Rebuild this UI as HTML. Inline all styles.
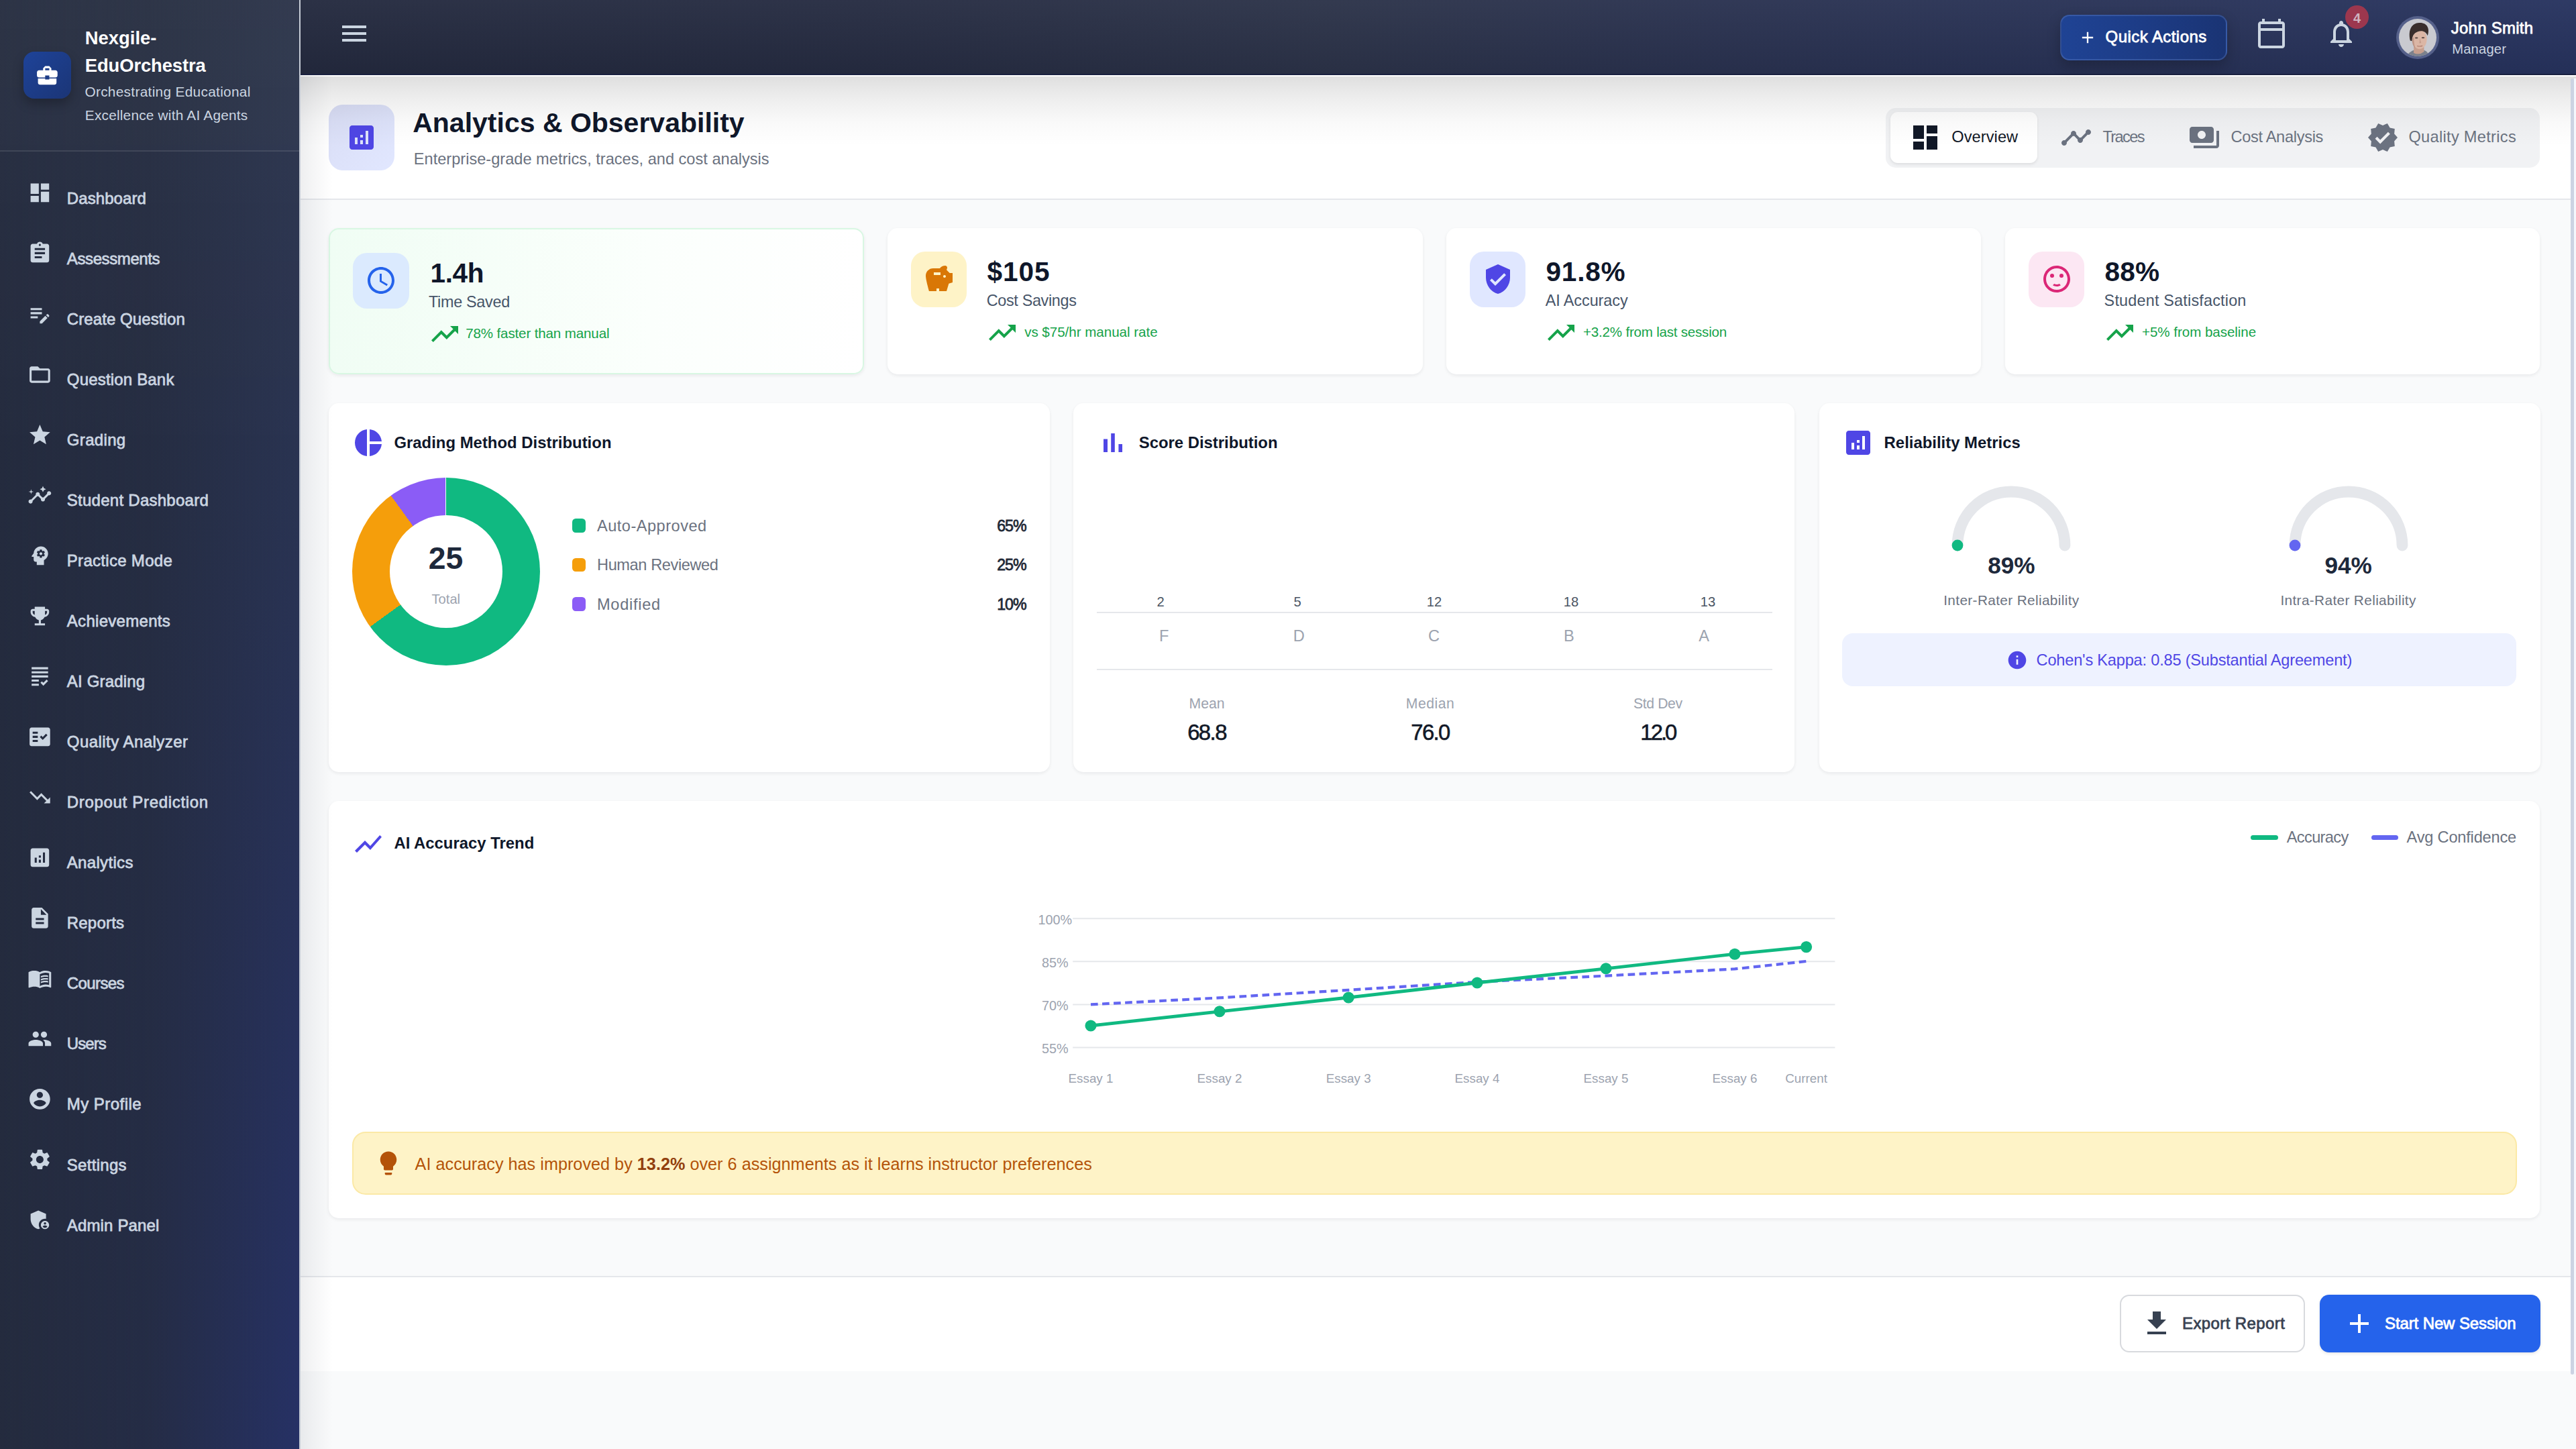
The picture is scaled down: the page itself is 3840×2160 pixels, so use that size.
<!DOCTYPE html><html lang="en"><head><meta charset="utf-8"><title>Analytics &amp; Observability</title><style>
*{box-sizing:border-box;margin:0;padding:0}
html,body{width:3840px;height:2160px;overflow:hidden;background:#f9fafb}
body{font-family:"Liberation Sans",Arial,sans-serif;}
#stage{position:absolute;left:0;top:0;width:1920px;height:1080px;zoom:2;overflow:hidden;background:#f9fafb}
@media (max-width:2400px){html,body{width:1920px;height:1080px}#stage{zoom:1}}
.t{position:absolute;white-space:nowrap;line-height:1;display:block;text-decoration:none}
.ic{position:absolute;display:block}
.abs{position:absolute}
aside{position:absolute;left:0;top:0;width:224px;height:1080px;border-right:1px solid rgba(226,232,240,.85);
 background:
  linear-gradient(to bottom, rgba(255,255,255,.03) 0, rgba(255,255,255,0) 32%),
  linear-gradient(to right, rgba(36,43,62,1) 0%, rgba(36,43,62,.8) 50%, rgba(36,43,62,.42) 75%, rgba(36,43,62,0) 100%),
  linear-gradient(to bottom, rgb(42,51,72) 0%, rgb(42,51,76) 10%, rgb(41,51,82) 35%, rgb(39,49,90) 65%, rgb(38,49,101) 100%);}
aside .hdr{position:absolute;left:0;top:0;width:223px;height:113px;border-bottom:1px solid rgba(255,255,255,.1);background:rgba(255,255,255,.012)}
header.top{position:absolute;left:224px;top:0;width:1696px;height:56px;
 background:linear-gradient(to bottom, rgba(255,255,255,.035), rgba(0,0,0,.07)),linear-gradient(90deg,#242a3f 0%,#262c42 25%,#2c3349 45%,#2a3250 62%,#27335f 100%);border-bottom:1px solid #1a2140}
main{position:absolute;left:224px;top:56px;width:1696px;height:1024px;background:#f9fafb}
.card{position:absolute;background:#fff;border-radius:7.5px;box-shadow:0 1px 3px rgba(15,23,42,.045),0 1px 2px rgba(15,23,42,.03)}
.ibox{position:absolute;border-radius:10.5px}
.semi{-webkit-text-stroke:0.3px currentColor}
</style></head><body><div id="stage">
<main>
<section class="abs" style="left:0;top:0;width:1696px;height:93px;background:#fff;border-bottom:1px solid #e5e7eb">
<div class="ibox" style="left:21px;top:22px;width:49px;height:49px;background:linear-gradient(135deg,#d9ddf5,#e1e7ff)"></div>
<svg class="ic" style="left:33.50px;top:34.50px;width:24px;height:24px;fill:#4f46e5;" viewBox="0 0 24 24"><path d="M19 3H5c-1.1 0-2 .9-2 2v14c0 1.1.9 2 2 2h14c1.1 0 2-.9 2-2V5c0-1.1-.9-2-2-2zM9 17H7v-5h2v5zm4 0h-2v-3h2v3zm0-5h-2v-2h2v2zm4 5h-2V7h2v10z"/></svg>
<h1 class="t" style="left:83.60px;top:25.50px;font-size:20.5px;color:#0f172a;font-weight:700;">Analytics &amp; Observability</h1>
<p class="t" style="left:84.40px;top:57.00px;font-size:11.8px;color:#6b7280;letter-spacing:0.001px;">Enterprise-grade metrics, traces, and cost analysis</p>
<nav class="abs" style="left:1181.7px;top:24.5px;width:487.5px;height:44.5px;background:#f1f2f4;border-radius:7.5px">
<div class="abs" style="left:3.5px;top:3px;width:109.5px;height:38.2px;background:#fff;border-radius:5.5px;box-shadow:0 1px 2px rgba(0,0,0,.09)"></div>
</nav>
<svg class="ic" style="left:1199.20px;top:34.40px;width:24px;height:24px;fill:#111827;" viewBox="0 0 24 24"><path d="M3 13h8V3H3v10zm0 8h8v-6H3v6zm10 0h8V11h-8v10zm0-18v6h8V3h-8z"/></svg>
<a class="t" style="left:1230.60px;top:40.50px;font-size:11.8px;color:#111827;letter-spacing:0.046px;">Overview</a>
<svg class="ic" style="left:1311.30px;top:34.40px;width:24px;height:24px;fill:#6b7280;" viewBox="0 0 24 24"><path d="M23 8c0 1.1-.9 2-2 2-.18 0-.35-.02-.51-.07l-3.560 3.550c.05.16.07.34.07.52 0 1.1-.9 2-2 2s-2-.9-2-2c0-.18.02-.36.07-.52l-2.550-2.550c-.16.05-.34.07-.52.07s-.36-.02-.52-.07l-4.550 4.560c.05.16.07.33.07.51 0 1.1-.9 2-2 2s-2-.9-2-2 .9-2 2-2c.18 0 .35.02.51.07l4.560-4.550C8.020 9.360 8 9.180 8 9c0-1.1.9-2 2-2s2 .9 2 2c0 .18-.02.36-.07.52l2.550 2.550c.16-.05.34-.07.52-.07s.36.02.52.07l3.550-3.560C19.020 8.350 19 8.180 19 8c0-1.1.9-2 2-2s2 .9 2 2z"/></svg>
<a class="t" style="left:1343.20px;top:40.50px;font-size:11.8px;color:#6b7280;letter-spacing:-0.805px;">Traces</a>
<svg class="ic" style="left:1407.10px;top:34.40px;width:24px;height:24px;fill:#6b7280;" viewBox="0 0 24 24"><path d="M19 14V6c0-1.1-.9-2-2-2H3c-1.1 0-2 .9-2 2v8c0 1.1.9 2 2 2h14c1.1 0 2-.9 2-2zm-9-1c-1.660 0-3-1.340-3-3s1.340-3 3-3 3 1.340 3 3-1.340 3-3 3zm13-6v11c0 1.1-.9 2-2 2H4v-2h17V7h2z"/></svg>
<a class="t" style="left:1438.70px;top:40.50px;font-size:11.8px;color:#6b7280;letter-spacing:-0.152px;">Cost Analysis</a>
<svg class="ic" style="left:1540.20px;top:34.40px;width:24px;height:24px;fill:#6b7280;" viewBox="0 0 24 24"><path d="M23 12l-2.440-2.790.34-3.690-3.610-.82-1.890-3.200L12 2.960 8.600 1.500 6.710 4.690 3.100 5.500l.34 3.700L1 12l2.440 2.790-.34 3.700 3.610.82L8.600 22.500l3.400-1.470 3.400 1.460 1.890-3.190 3.610-.82-.34-3.690L23 12zm-12.910 4.720l-3.800-3.810 1.480-1.480 2.320 2.330 5.850-5.870 1.480 1.480-7.330 7.350z"/></svg>
<a class="t" style="left:1571.20px;top:40.50px;font-size:11.8px;color:#6b7280;letter-spacing:0.155px;">Quality Metrics</a>
<div class="abs" style="left:0;top:1px;width:1696px;height:52px;background:linear-gradient(to bottom,rgba(0,0,0,.125) 0,rgba(0,0,0,.07) 30%,rgba(0,0,0,.025) 65%,rgba(0,0,0,0) 100%)"></div>
</section>
<article class="card" style="left:21.1px;top:113.8px;width:398.7px;height:109px;background:linear-gradient(90deg,#f0fdf4 0%,#fbfffc 60%,#ffffff 100%);border:1px solid #d9f7e3;">
</article>
<div class="ibox" style="left:39.2px;top:132.4px;width:41.6px;height:41.6px;background:#dbeafe"></div>
<svg class="ic" style="left:48.00px;top:140.80px;width:24px;height:24px;fill:#2563eb;" viewBox="0 0 24 24"><path d="M11.990 2C6.470 2 2 6.480 2 12s4.470 10 9.990 10C17.520 22 22 17.520 22 12S17.520 2 11.990 2zM12 20c-4.420 0-8-3.580-8-8s3.580-8 8-8 8 3.580 8 8-3.580 8-8 8zm.5-13H11v6l5.250 3.150.75-1.230-4.500-2.670z"/></svg>
<div class="t" style="left:96.80px;top:137.50px;font-size:20.3px;color:#0f172a;font-weight:700;letter-spacing:-0.207px;">1.4h</div>
<div class="t" style="left:95.50px;top:163.50px;font-size:11.7px;color:#475569;letter-spacing:-0.155px;">Time Saved</div>
<svg class="ic" style="left:95.30px;top:180.90px;width:24px;height:24px;fill:#16a34a;" viewBox="0 0 24 24"><path d="M16 6l2.290 2.290-4.880 4.880-4-4L2 16.590 3.410 18l6-6 4 4 6.300-6.290L22 12V6z"/></svg>
<div class="t" style="left:123.10px;top:187.50px;font-size:10.3px;color:#16a34a;letter-spacing:-0.076px;">78% faster than manual</div>
<article class="card" style="left:437.6px;top:114.1px;width:398.7px;height:109px;">
</article>
<div class="ibox" style="left:455.1px;top:131.5px;width:41.6px;height:41.6px;background:#fef3c7"></div>
<svg class="ic" style="left:463.87px;top:139.90px;width:24px;height:24px;fill:#d97706;" viewBox="0 0 24 24"><path d="M19.830 7.500l-2.270-2.270c.07-.42.18-.81.32-1.150.08-.18.12-.37.12-.58 0-.83-.67-1.500-1.500-1.500-1.640 0-3.090.79-4 2h-5C4.460 4 2 6.460 2 9.500S4.500 21 4.500 21H10v-2h2v2h5.500l1.680-5.590 2.820-.94V7.500h-2.170zM13 9H8V7h5v2zm3 2c-.55 0-1-.45-1-1s.45-1 1-1 1 .45 1 1-.45 1-1 1z"/></svg>
<div class="t" style="left:511.77px;top:136.50px;font-size:20.3px;color:#0f172a;font-weight:700;letter-spacing:0.480px;">$105</div>
<div class="t" style="left:511.37px;top:162.50px;font-size:11.7px;color:#475569;letter-spacing:-0.167px;">Cost Savings</div>
<svg class="ic" style="left:511.17px;top:180.00px;width:24px;height:24px;fill:#16a34a;" viewBox="0 0 24 24"><path d="M16 6l2.290 2.290-4.880 4.880-4-4L2 16.590 3.410 18l6-6 4 4 6.300-6.290L22 12V6z"/></svg>
<div class="t" style="left:539.57px;top:186.50px;font-size:10.3px;color:#16a34a;letter-spacing:-0.016px;">vs $75/hr manual rate</div>
<article class="card" style="left:854.0px;top:114.1px;width:398.7px;height:109px;">
</article>
<div class="ibox" style="left:871.5px;top:131.5px;width:41.6px;height:41.6px;background:#e0e7ff"></div>
<svg class="ic" style="left:880.34px;top:139.90px;width:24px;height:24px;fill:#4f46e5;" viewBox="0 0 24 24"><path d="M12 1L3 5v6c0 5.550 3.840 10.740 9 12 5.160-1.260 9-6.450 9-12V5l-9-4zm-2 16l-4-4 1.410-1.410L10 14.170l6.590-6.590L18 9l-8 8z"/></svg>
<div class="t" style="left:928.24px;top:136.50px;font-size:20.3px;color:#0f172a;font-weight:700;letter-spacing:0.385px;">91.8%</div>
<div class="t" style="left:927.84px;top:162.50px;font-size:11.7px;color:#475569;letter-spacing:-0.027px;">AI Accuracy</div>
<svg class="ic" style="left:927.64px;top:180.00px;width:24px;height:24px;fill:#16a34a;" viewBox="0 0 24 24"><path d="M16 6l2.290 2.290-4.880 4.880-4-4L2 16.590 3.410 18l6-6 4 4 6.300-6.290L22 12V6z"/></svg>
<div class="t" style="left:956.04px;top:186.50px;font-size:10.3px;color:#16a34a;letter-spacing:-0.115px;">+3.2% from last session</div>
<article class="card" style="left:1270.5px;top:114.1px;width:398.7px;height:109px;">
</article>
<div class="ibox" style="left:1288.0px;top:131.5px;width:41.6px;height:41.6px;background:#fce7f3"></div>
<svg class="ic" style="left:1296.81px;top:139.90px;width:24px;height:24px;fill:#db2777;" viewBox="0 0 24 24"><circle cx="15.5" cy="9.5" r="1.5"/><circle cx="8.5" cy="9.5" r="1.5"/><path d="M11.990 2C6.470 2 2 6.480 2 12s4.470 10 9.990 10C17.520 22 22 17.520 22 12S17.520 2 11.990 2zM12 20c-4.420 0-8-3.580-8-8s3.580-8 8-8 8 3.580 8 8-3.580 8-8 8zm0-4c-.73 0-1.380-.18-1.960-.52-.12.14-.86.98-1.010 1.150.86.55 1.870.87 2.970.87 1.110 0 2.120-.33 2.980-.88-.97-1.090-.01-.02-1.010-1.150-.59.35-1.240.53-1.970.53z"/></svg>
<div class="t" style="left:1344.71px;top:136.50px;font-size:20.3px;color:#0f172a;font-weight:700;letter-spacing:0.085px;">88%</div>
<div class="t" style="left:1344.31px;top:162.50px;font-size:11.7px;color:#475569;letter-spacing:0.097px;">Student Satisfaction</div>
<svg class="ic" style="left:1344.11px;top:180.00px;width:24px;height:24px;fill:#16a34a;" viewBox="0 0 24 24"><path d="M16 6l2.290 2.290-4.880 4.880-4-4L2 16.590 3.410 18l6-6 4 4 6.300-6.290L22 12V6z"/></svg>
<div class="t" style="left:1372.51px;top:186.50px;font-size:10.3px;color:#16a34a;letter-spacing:-0.031px;">+5% from baseline</div>
<article class="card" style="left:21.0px;top:244.5px;width:537.4px;height:275px"></article>
<article class="card" style="left:576.2px;top:244.5px;width:537.4px;height:275px"></article>
<article class="card" style="left:1131.9px;top:244.5px;width:537.4px;height:275px"></article>
<svg class="ic" style="left:38.50px;top:262.00px;width:24px;height:24px;fill:#4f46e5;" viewBox="0 0 24 24"><path d="M11 2v20c-5.070-.5-9-4.790-9-10s3.930-9.500 9-10zm2.030 0v8.990H22c-.47-4.740-4.240-8.520-8.970-8.990zm0 11.010V22c4.740-.47 8.500-4.250 8.970-8.990h-8.970z"/></svg>
<h3 class="t" style="left:69.70px;top:268.00px;font-size:11.95px;color:#0f172a;font-weight:700;letter-spacing:0.005px;">Grading Method Distribution</h3>
<svg class="ic" style="left:593.70px;top:262.00px;width:24px;height:24px;fill:#4f46e5;" viewBox="0 0 24 24"><path d="M5 9.200h3V19H5zM10.600 5h2.800v14h-2.800zm5.600 8H19v6h-2.800z"/></svg>
<h3 class="t" style="left:624.90px;top:268.00px;font-size:11.95px;color:#0f172a;font-weight:700;letter-spacing:-0.010px;">Score Distribution</h3>
<svg class="ic" style="left:1149.10px;top:262.00px;width:24px;height:24px;fill:#4f46e5;" viewBox="0 0 24 24"><path d="M19 3H5c-1.1 0-2 .9-2 2v14c0 1.1.9 2 2 2h14c1.1 0 2-.9 2-2V5c0-1.1-.9-2-2-2zM9 17H7v-5h2v5zm4 0h-2v-3h2v3zm0-5h-2v-2h2v2zm4 5h-2V7h2v10z"/></svg>
<h3 class="t" style="left:1180.30px;top:268.00px;font-size:11.95px;color:#0f172a;font-weight:700;">Reliability Metrics</h3>
<div class="abs" style="left:38.4px;top:300.0px;width:140px;height:140px;border-radius:50%;background:conic-gradient(#10b981 0 234deg,#f59e0b 234deg 324deg,#8b5cf6 324deg 359.6deg,#e9fff7 359.6deg 360deg)"></div>
<div class="abs" style="left:66.4px;top:328.0px;width:84px;height:84px;border-radius:50%;background:#fff"></div>
<div class="t" style="left:108.30px;top:348.50px;font-size:23.2px;color:#1e293b;font-weight:700;transform:translateX(-50%);">25</div>
<div class="t" style="left:108.40px;top:385.50px;font-size:10.1px;color:#9ca3af;transform:translateX(-50%);">Total</div>
<div class="abs" style="left:202.5px;top:330.7px;width:10.2px;height:10.2px;border-radius:2.6px;background:#10b981"></div>
<div class="t" style="left:221.00px;top:330.50px;font-size:11.8px;color:#6b7280;letter-spacing:0.240px;">Auto-Approved</div>
<div class="t" style="left:540.80px;top:330.50px;font-size:11.6px;color:#1f2937;-webkit-text-stroke:0.38px currentColor;letter-spacing:-0.509px;transform:translateX(-100%);">65%</div>
<div class="abs" style="left:202.5px;top:359.9px;width:10.2px;height:10.2px;border-radius:2.6px;background:#f59e0b"></div>
<div class="t" style="left:221.00px;top:359.50px;font-size:11.8px;color:#6b7280;letter-spacing:-0.203px;">Human Reviewed</div>
<div class="t" style="left:540.80px;top:359.50px;font-size:11.6px;color:#1f2937;-webkit-text-stroke:0.38px currentColor;letter-spacing:-0.509px;transform:translateX(-100%);">25%</div>
<div class="abs" style="left:202.5px;top:389.1px;width:10.2px;height:10.2px;border-radius:2.6px;background:#8b5cf6"></div>
<div class="t" style="left:221.00px;top:389.00px;font-size:11.8px;color:#6b7280;letter-spacing:0.357px;">Modified</div>
<div class="t" style="left:540.80px;top:389.00px;font-size:11.6px;color:#1f2937;-webkit-text-stroke:0.38px currentColor;letter-spacing:-0.509px;transform:translateX(-100%);">10%</div>
<div class="abs" style="left:593.6px;top:399.8px;width:503.2px;height:1px;background:#e5e7eb"></div>
<div class="abs" style="left:593.6px;top:442.3px;width:503.2px;height:1px;background:#e5e7eb"></div>
<div class="t" style="left:641.00px;top:387.50px;font-size:10.1px;color:#4b5563;transform:translateX(-50%);">2</div>
<div class="t" style="left:643.60px;top:412.50px;font-size:11.8px;color:#9ca3af;transform:translateX(-50%);">F</div>
<div class="t" style="left:743.00px;top:387.50px;font-size:10.1px;color:#4b5563;transform:translateX(-50%);">5</div>
<div class="t" style="left:744.20px;top:412.50px;font-size:11.8px;color:#9ca3af;transform:translateX(-50%);">D</div>
<div class="t" style="left:845.00px;top:387.50px;font-size:10.1px;color:#4b5563;transform:translateX(-50%);">12</div>
<div class="t" style="left:844.80px;top:412.50px;font-size:11.8px;color:#9ca3af;transform:translateX(-50%);">C</div>
<div class="t" style="left:947.00px;top:387.50px;font-size:10.1px;color:#4b5563;transform:translateX(-50%);">18</div>
<div class="t" style="left:945.40px;top:412.50px;font-size:11.8px;color:#9ca3af;transform:translateX(-50%);">B</div>
<div class="t" style="left:1049.00px;top:387.50px;font-size:10.1px;color:#4b5563;transform:translateX(-50%);">13</div>
<div class="t" style="left:1046.00px;top:412.50px;font-size:11.8px;color:#9ca3af;transform:translateX(-50%);">A</div>
<div class="t" style="left:675.50px;top:463.00px;font-size:10.6px;color:#9ca3af;letter-spacing:-0.005px;transform:translateX(-50%);">Mean</div>
<div class="t" style="left:675.50px;top:482.00px;font-size:16.4px;color:#111827;-webkit-text-stroke:0.3px currentColor;letter-spacing:-0.773px;transform:translateX(-50%);">68.8</div>
<div class="t" style="left:842.00px;top:463.00px;font-size:10.6px;color:#9ca3af;letter-spacing:0.247px;transform:translateX(-50%);">Median</div>
<div class="t" style="left:842.00px;top:482.00px;font-size:16.4px;color:#111827;-webkit-text-stroke:0.3px currentColor;letter-spacing:-0.806px;transform:translateX(-50%);">76.0</div>
<div class="t" style="left:1011.70px;top:463.00px;font-size:10.6px;color:#9ca3af;letter-spacing:-0.201px;transform:translateX(-50%);">Std Dev</div>
<div class="t" style="left:1011.70px;top:482.00px;font-size:16.4px;color:#111827;-webkit-text-stroke:0.3px currentColor;letter-spacing:-1.473px;transform:translateX(-50%);">12.0</div>
<svg class="abs" style="left:1225.20px;top:300.30px;width:100px;height:60px;overflow:visible" viewBox="0 0 100 60"><path d="M 10 50 A 40 40 0 0 1 90 50" fill="none" stroke="#e5e7eb" stroke-width="8.4" stroke-linecap="round"/><circle cx="10" cy="50" r="4.2" fill="#10b981"/></svg>
<div class="t" style="left:1275.20px;top:356.50px;font-size:17.6px;color:#1e293b;font-weight:700;transform:translateX(-50%);">89%</div>
<div class="t" style="left:1275.20px;top:386.50px;font-size:10.4px;color:#6b7280;letter-spacing:0.177px;transform:translateX(-50%);">Inter-Rater Reliability</div>
<svg class="abs" style="left:1476.30px;top:300.30px;width:100px;height:60px;overflow:visible" viewBox="0 0 100 60"><path d="M 10 50 A 40 40 0 0 1 90 50" fill="none" stroke="#e5e7eb" stroke-width="8.4" stroke-linecap="round"/><circle cx="10" cy="50" r="4.2" fill="#6366f1"/></svg>
<div class="t" style="left:1526.30px;top:356.50px;font-size:17.6px;color:#1e293b;font-weight:700;transform:translateX(-50%);">94%</div>
<div class="t" style="left:1526.30px;top:386.50px;font-size:10.4px;color:#6b7280;letter-spacing:0.177px;transform:translateX(-50%);">Intra-Rater Reliability</div>
<div class="abs" style="left:1149.0px;top:416.2px;width:502.6px;height:39.1px;border-radius:8px;background:#eef2ff"></div>
<svg class="ic" style="left:1271.50px;top:428.10px;width:16px;height:16px;fill:#4f46e5;" viewBox="0 0 24 24"><path d="M12 2C6.480 2 2 6.480 2 12s4.480 10 10 10 10-4.480 10-10S17.520 2 12 2zm1 15h-2v-6h2v6zm0-8h-2V7h2v2z"/></svg>
<div class="t" style="left:1293.80px;top:430.50px;font-size:11.8px;color:#4f46e5;letter-spacing:-0.103px;">Cohen's Kappa: 0.85 (Substantial Agreement)</div>
<article class="card" style="left:21.0px;top:541.2px;width:1648.2px;height:310.6px"></article>
<svg class="ic" style="left:38.60px;top:561.00px;width:24px;height:24px;fill:#4f46e5;" viewBox="0 0 24 24"><path d="M3.500 18.490l6-6.010 4 4L22 6.920l-1.410-1.410-7.090 7.970-4-4L2 16.990z"/></svg>
<h3 class="t" style="left:69.70px;top:566.50px;font-size:11.95px;color:#0f172a;font-weight:700;letter-spacing:0.000px;">AI Accuracy Trend</h3>
<div class="abs" style="left:1453.6px;top:566.4px;width:20.2px;height:3.6px;border-radius:2px;background:#10b981"></div>
<div class="t" style="left:1480.40px;top:562.50px;font-size:11.8px;color:#6b7280;letter-spacing:-0.332px;">Accuracy</div>
<div class="abs" style="left:1543.3px;top:566.4px;width:20.2px;height:3.6px;border-radius:2px;background:#6366f1"></div>
<div class="t" style="left:1569.80px;top:562.50px;font-size:11.8px;color:#6b7280;letter-spacing:-0.100px;">Avg Confidence</div>
<svg class="abs" style="left:0;top:0;width:1696px;height:1024px;overflow:visible;font-family:'Liberation Sans',Arial,sans-serif" viewBox="224 56 1696 1024"><line x1="799.6" x2="1367.7" y1="684.6" y2="684.6" stroke="#e5e7eb" stroke-width="1"/><text x="786.4" y="688.9" font-size="9.9" fill="#9ca3af" text-anchor="middle">100%</text><line x1="799.6" x2="1367.7" y1="716.6" y2="716.6" stroke="#e5e7eb" stroke-width="1"/><text x="786.4" y="720.9" font-size="9.9" fill="#9ca3af" text-anchor="middle">85%</text><line x1="799.6" x2="1367.7" y1="748.7" y2="748.7" stroke="#e5e7eb" stroke-width="1"/><text x="786.4" y="753.0" font-size="9.9" fill="#9ca3af" text-anchor="middle">70%</text><line x1="799.6" x2="1367.7" y1="780.8" y2="780.8" stroke="#e5e7eb" stroke-width="1"/><text x="786.4" y="785.1" font-size="9.9" fill="#9ca3af" text-anchor="middle">55%</text><polyline fill="none" stroke="#6366f1" stroke-width="2.1" stroke-dasharray="5.33 3.2" points="813,748.7 909,743.7 1005.1,737.9 1101,731.9 1197,727.3 1293,722.2 1346.3,716.5"/><polyline fill="none" stroke="#10b981" stroke-width="2.4" stroke-linejoin="round" points="813,764.5 909,753.9 1005.1,743.5 1101,732.5 1197,721.9 1293,711.1 1346.3,705.8"/><circle cx="813" cy="764.5" r="4.27" fill="#10b981"/><circle cx="909" cy="753.9" r="4.27" fill="#10b981"/><circle cx="1005.1" cy="743.5" r="4.27" fill="#10b981"/><circle cx="1101" cy="732.5" r="4.27" fill="#10b981"/><circle cx="1197" cy="721.9" r="4.27" fill="#10b981"/><circle cx="1293" cy="711.1" r="4.27" fill="#10b981"/><circle cx="1346.3" cy="705.8" r="4.27" fill="#10b981"/><text x="813" y="806.8" font-size="9.4" fill="#9ca3af" text-anchor="middle">Essay 1</text><text x="909" y="806.8" font-size="9.4" fill="#9ca3af" text-anchor="middle">Essay 2</text><text x="1005.1" y="806.8" font-size="9.4" fill="#9ca3af" text-anchor="middle">Essay 3</text><text x="1101" y="806.8" font-size="9.4" fill="#9ca3af" text-anchor="middle">Essay 4</text><text x="1197" y="806.8" font-size="9.4" fill="#9ca3af" text-anchor="middle">Essay 5</text><text x="1293" y="806.8" font-size="9.4" fill="#9ca3af" text-anchor="middle">Essay 6</text><text x="1346.3" y="806.8" font-size="9.4" fill="#9ca3af" text-anchor="middle">Current</text></svg>
<div class="abs" style="left:38.4px;top:787.5px;width:1613.4px;height:47px;border-radius:10px;background:#fef3c7;border:1px solid #fbe9a6"></div>
<svg class="ic" style="left:54.80px;top:800.70px;width:21px;height:21px;fill:#b45309;" viewBox="0 0 24 24"><path d="M9 21c0 .5.4 1 1 1h4c.6 0 1-.5 1-1v-1H9v1zm3-19C8.100 2 5 5.100 5 9c0 2.400 1.200 4.500 3 5.700V17c0 .5.4 1 1 1h6c.6 0 1-.5 1-1v-2.300c1.800-1.300 3-3.400 3-5.700 0-3.900-3.100-7-7-7z"/></svg>
<p class="t" style="left:85.3px;top:805.50px;font-size:12.6px;color:#b45309;letter-spacing:0.015px">AI accuracy has improved by <strong style="color:#92400e">13.2%</strong> over 6 assignments as it learns instructor preferences</p>
<footer class="abs" style="left:0;top:895.0px;width:1696px;height:71px;background:#fff;border-top:1px solid #e5e7eb"></footer>
<div class="abs" style="left:1356.1px;top:909.0px;width:138.1px;height:43px;border-radius:7px;background:#fff;border:1px solid #d8dade"></div>
<svg class="ic" style="left:1371.30px;top:918.30px;width:24px;height:24px;fill:#374151;" viewBox="0 0 24 24"><path d="M19 9h-4V3H9v6H5l7 7 7-7zM5 18v2h14v-2H5z"/></svg>
<div class="t" style="left:1402.50px;top:924.50px;font-size:12.0px;color:#374151;-webkit-text-stroke:0.38px currentColor;letter-spacing:0.197px;">Export Report</div>
<div class="abs" style="left:1504.8px;top:909.0px;width:164.6px;height:43px;border-radius:7px;background:#2563eb;box-shadow:0 1px 2px rgba(0,0,0,.1)"></div>
<svg class="ic" style="left:1522.30px;top:918.50px;width:24px;height:24px;fill:#ffffff;" viewBox="0 0 24 24"><path d="M19 13h-6v6h-2v-6H5v-2h6V5h2v6h6v2z"/></svg>
<div class="t" style="left:1553.50px;top:924.50px;font-size:12.0px;color:#ffffff;-webkit-text-stroke:0.4px currentColor;letter-spacing:-0.057px;">Start New Session</div>
<div class="abs" style="left:0;top:0;width:24px;height:1024px;background:linear-gradient(90deg,rgba(15,23,42,.072) 0,rgba(15,23,42,.045) 35%,rgba(15,23,42,.018) 70%,rgba(15,23,42,0) 100%)"></div>
<div class="abs" style="left:1694.5px;top:2.5px;width:1.5px;height:966px;background:#f5f7fd"></div>
<div class="abs" style="left:1692.0px;top:2.5px;width:2.5px;height:966px;border-radius:1.5px;background:#ccd3e3"></div>
</main>
<header class="top">
<svg class="ic" style="left:27.90px;top:13.10px;width:24px;height:24px;fill:#cbd5e1;" viewBox="0 0 24 24"><path d="M3 18h18v-2H3v2zm0-5h18v-2H3v2zm0-7v2h18V6H3z"/></svg>
<div class="abs" style="left:1311.4px;top:11.2px;width:124.6px;height:33.7px;border-radius:7px;border:1px solid rgba(120,150,220,.28);background:linear-gradient(90deg,#1f4394 0%,#1d3c86 50%,#1a3474 100%);box-shadow:0 4px 10px rgba(0,0,0,.22)"></div>
<svg class="ic" style="left:1325.00px;top:21.10px;width:14px;height:14px;fill:#ffffff;" viewBox="0 0 24 24"><path d="M19 13h-6v6h-2v-6H5v-2h6V5h2v6h6v2z"/></svg>
<div class="t" style="left:1345.30px;top:21.50px;font-size:12.0px;color:#ffffff;-webkit-text-stroke:0.4px currentColor;letter-spacing:0.217px;">Quick Actions</div>
<svg class="ic" style="left:1457.00px;top:13.00px;width:24px;height:24px;fill:#cbd5e1;" viewBox="0 0 24 24"><path d="M20 3h-1V1h-2v2H7V1H5v2H4c-1.1 0-2 .9-2 2v16c0 1.1.9 2 2 2h16c1.1 0 2-.9 2-2V5c0-1.1-.9-2-2-2zm0 18H4V10h16v11zm0-13H4V5h16v3z"/></svg>
<svg class="ic" style="left:1509.00px;top:13.00px;width:24px;height:24px;fill:#cbd5e1;" viewBox="0 0 24 24"><path d="M12 22c1.1 0 2-.9 2-2h-4c0 1.1.9 2 2 2zm6-6v-5c0-3.070-1.630-5.640-4.500-6.320V4c0-.83-.67-1.500-1.500-1.500s-1.500.67-1.500 1.500v.68C7.640 5.360 6 7.920 6 11v5l-2 2v1h16v-1l-2-2zm-2 1H8v-6c0-2.480 1.510-4.500 4-4.500s4 2.020 4 4.500v6z"/></svg>
<div class="abs" style="left:1524.0px;top:4px;width:17.5px;height:17.5px;border-radius:50%;background:#9c374e"></div>
<div class="t" style="left:1532.80px;top:8.50px;font-size:10px;color:#cfb4c0;font-weight:700;transform:translateX(-50%);">4</div>
<svg class="abs" style="left:1562.0px;top:12.2px;width:32px;height:32px" viewBox="0 0 32 32"><defs><clipPath id="av"><circle cx="16" cy="16" r="14"/></clipPath></defs><circle cx="16" cy="16" r="16" fill="#55608a"/><g clip-path="url(#av)"><rect width="32" height="32" fill="#c9cad0"/><path d="M7 32 L9.5 27.5 Q12 25.5 14 25 L21 25.5 Q24 26.5 25.5 32 Z" fill="#7b818c"/><path d="M13.2 21 L13 27.5 Q17 29.5 20.8 26.5 L20.6 21 Z" fill="#c79f8e"/><ellipse cx="17.3" cy="17.2" rx="5.5" ry="7.4" fill="#dbb6a5"/><path d="M11.9 17 Q11.6 22 14.5 24.2 Q12.8 20.5 13.3 15.5 Z" fill="#b48a7b" opacity=".75"/><path d="M10.4 18.2 C8.6 10 11.8 5.2 17 5 C23.2 4.6 25.2 9.4 23.4 14.6 C22.2 11.2 19 10.4 16 11.6 C13 12.6 11.9 15 11.7 18.6 Z" fill="#3a2e2c"/><ellipse cx="15.1" cy="16.3" rx="1.15" ry=".5" fill="#3f302d" opacity=".85"/><ellipse cx="20" cy="16.1" rx="1.15" ry=".5" fill="#3f302d" opacity=".85"/><path d="M17.6 16.8 L18.6 20 L17.2 20.3 Z" fill="#b48a7b" opacity=".6"/><path d="M15.6 22.2 Q17.6 22.9 19.6 22.1" stroke="#a87668" stroke-width=".55" fill="none"/></g></svg>
<div class="t" style="left:1602.90px;top:15.00px;font-size:12.0px;color:#ffffff;-webkit-text-stroke:0.4px currentColor;letter-spacing:0.119px;">John Smith</div>
<div class="t" style="left:1603.60px;top:31.50px;font-size:10.1px;color:#cbd5e1;letter-spacing:0.090px;">Manager</div>
</header>
<aside>
<div class="hdr"></div>
<div class="abs" style="left:17.6px;top:38.4px;width:35.2px;height:35.2px;border-radius:8px;background:linear-gradient(135deg,#1e4399,#1b3576);box-shadow:0 4px 8px rgba(0,0,0,.25)"></div>
<svg class="ic" style="left:26.00px;top:46.80px;width:18.4px;height:18.4px;fill:#ffffff;" viewBox="0 0 24 24"><path d="M10 16v-1H3.010L3 19c0 1.110.89 2 2 2h14c1.110 0 2-.89 2-2v-4h-7v1h-4zm10-9h-4.010V5l-2-2h-4l-2 2v2H4c-1.1 0-2 .9-2 2v3c0 1.110.89 2 2 2h6v-2h4v2h6c1.1 0 2-.9 2-2V9c0-1.1-.9-2-2-2zm-6 0h-4V5h4v2z"/></svg>
<div class="t" style="left:63.40px;top:21.50px;font-size:13.7px;color:#ffffff;font-weight:700;">Nexgile-</div>
<div class="t" style="left:63.40px;top:42.00px;font-size:13.7px;color:#ffffff;font-weight:700;letter-spacing:-0.055px;">EduOrchestra</div>
<div class="t" style="left:63.20px;top:63.50px;font-size:10.4px;color:#cbd5e1;letter-spacing:0.160px;">Orchestrating Educational</div>
<div class="t" style="left:63.40px;top:81.00px;font-size:10.4px;color:#cbd5e1;letter-spacing:0.112px;">Excellence with AI Agents</div>
<nav>
<svg class="ic" style="left:20.60px;top:134.70px;width:18.4px;height:18.4px;fill:#cbd5e1;" viewBox="0 0 24 24"><path d="M3 13h8V3H3v10zm0 8h8v-6H3v6zm10 0h8V11h-8v10zm0-18v6h8V3h-8z"/></svg>
<a class="t" style="left:49.90px;top:142.00px;font-size:12.0px;color:#cbd5e1;-webkit-text-stroke:0.38px currentColor;letter-spacing:0.043px;">Dashboard</a>
<svg class="ic" style="left:20.60px;top:179.73px;width:18.4px;height:18.4px;fill:#cbd5e1;" viewBox="0 0 24 24"><path d="M19 3h-4.18C14.4 1.84 13.3 1 12 1c-1.3 0-2.4.84-2.82 2H5c-1.1 0-2 .9-2 2v14c0 1.1.9 2 2 2h14c1.1 0 2-.9 2-2V5c0-1.1-.9-2-2-2zm-7 0c.55 0 1 .45 1 1s-.45 1-1 1-1-.45-1-1 .45-1 1-1zm2 14H7v-2h7v2zm3-4H7v-2h10v2zm0-4H7V7h10v2z"/></svg>
<a class="t" style="left:49.90px;top:187.00px;font-size:12.0px;color:#cbd5e1;-webkit-text-stroke:0.38px currentColor;letter-spacing:-0.196px;">Assessments</a>
<svg class="ic" style="left:20.60px;top:224.76px;width:18.4px;height:18.4px;fill:#cbd5e1;" viewBox="0 0 24 24"><path d="M3 10h11v2H3v-2zm0-2h11V6H3v2zm0 8h7v-2H3v2zm15.01-3.13.71-.71c.39-.39 1.02-.39 1.41 0l.71.71c.39.39.39 1.02 0 1.41l-.71.71-2.12-2.12zm-.71.71-5.3 5.3V21h2.12l5.3-5.3-2.12-2.12z"/></svg>
<a class="t" style="left:49.90px;top:232.00px;font-size:12.0px;color:#cbd5e1;-webkit-text-stroke:0.38px currentColor;letter-spacing:0.044px;">Create Question</a>
<svg class="ic" style="left:20.60px;top:269.79px;width:18.4px;height:18.4px;fill:#cbd5e1;" viewBox="0 0 24 24"><path d="M20 6h-8l-2-2H4c-1.1 0-1.99.9-1.99 2L2 18c0 1.1.9 2 2 2h16c1.1 0 2-.9 2-2V8c0-1.1-.9-2-2-2zm0 12H4V8h16v10z"/></svg>
<a class="t" style="left:49.90px;top:277.00px;font-size:12.0px;color:#cbd5e1;-webkit-text-stroke:0.38px currentColor;letter-spacing:0.090px;">Question Bank</a>
<svg class="ic" style="left:20.60px;top:314.82px;width:18.4px;height:18.4px;fill:#cbd5e1;" viewBox="0 0 24 24"><path d="M12 17.27L18.18 21l-1.64-7.03L22 9.24l-7.19-.61L12 2 9.19 8.63 2 9.24l5.46 4.73L5.82 21z"/></svg>
<a class="t" style="left:49.90px;top:322.00px;font-size:12.0px;color:#cbd5e1;-webkit-text-stroke:0.38px currentColor;letter-spacing:0.168px;">Grading</a>
<svg class="ic" style="left:20.60px;top:359.85px;width:18.4px;height:18.4px;fill:#cbd5e1;" viewBox="0 0 24 24"><path d="M21 8c-1.45 0-2.26 1.44-1.93 2.51l-3.55 3.56c-.3-.09-.74-.09-1.04 0l-2.55-2.55C12.27 10.45 11.46 9 10 9c-1.45 0-2.27 1.44-1.93 2.52l-4.56 4.55C2.44 15.74 1 16.55 1 18c0 1.1.9 2 2 2 1.45 0 2.26-1.44 1.93-2.51l4.55-4.56c.3.09.74.09 1.04 0l2.55 2.55C12.73 16.55 13.54 18 15 18c1.45 0 2.27-1.44 1.93-2.52l3.56-3.55c1.07.33 2.51-.48 2.51-1.93 0-1.1-.9-2-2-2z"/><path d="M15 9l.94-2.07L18 6l-2.06-.93L15 3l-.92 2.07L12 6l2.08.93zM3.500 11L4 9l2-.5L4 8l-.5-2L3 8l-2 .5L3 9z"/></svg>
<a class="t" style="left:49.90px;top:367.00px;font-size:12.0px;color:#cbd5e1;-webkit-text-stroke:0.38px currentColor;letter-spacing:0.131px;">Student Dashboard</a>
<svg class="ic" style="left:20.60px;top:404.88px;width:18.4px;height:18.4px;fill:#cbd5e1;" viewBox="0 0 24 24"><path d="M13 8.570c-.79 0-1.43.64-1.43 1.43s.64 1.43 1.43 1.43 1.43-.64 1.43-1.43-.64-1.43-1.43-1.43z"/><path d="M13 3C9.250 3 6.200 5.940 6.020 9.640L4.100 12.200c-.25.33-.01.8.4.8H6v3c0 1.100.9 2 2 2h1v3h7v-4.680c2.360-1.120 4-3.530 4-6.320 0-3.870-3.130-7-7-7zm3 7c0 .13-.01.26-.02.39l.83.66c.08.06.1.16.05.25l-.8 1.390c-.05.09-.16.12-.24.09l-.99-.4c-.21.16-.43.29-.67.39L14 13.830c-.01.1-.1.17-.2.17h-1.600c-.1 0-.18-.07-.2-.17l-.15-1.060c-.25-.1-.47-.23-.68-.39l-.99.4c-.09.03-.2 0-.25-.09l-.8-1.390c-.05-.08-.03-.19.05-.25l.84-.66c-.01-.13-.02-.26-.02-.39s.02-.27.04-.39l-.85-.66c-.08-.06-.1-.16-.05-.26l.8-1.380c.05-.09.15-.12.24-.09l1 .4c.2-.15.43-.29.67-.39l.15-1.060c.02-.1.1-.17.2-.17h1.600c.1 0 .18.07.2.17l.15 1.060c.24.1.46.23.67.39l1-.4c.09-.03.2 0 .24.09l.8 1.380c.05.09.03.2-.05.26l-.85.66c.03.12.04.25.04.39z"/></svg>
<a class="t" style="left:49.90px;top:412.00px;font-size:12.0px;color:#cbd5e1;-webkit-text-stroke:0.38px currentColor;letter-spacing:0.150px;">Practice Mode</a>
<svg class="ic" style="left:20.60px;top:449.91px;width:18.4px;height:18.4px;fill:#cbd5e1;" viewBox="0 0 24 24"><path d="M19 5h-2V3H7v2H5c-1.1 0-2 .9-2 2v1c0 2.55 1.92 4.63 4.39 4.940.63 1.500 1.980 2.630 3.610 2.960V19H7v2h10v-2h-4v-3.100c1.630-.33 2.980-1.460 3.610-2.960C19.080 12.630 21 10.550 21 8V7c0-1.1-.9-2-2-2zM5 8V7h2v3.820C5.840 10.400 5 9.300 5 8zm14 0c0 1.300-.84 2.400-2 2.820V7h2v1z"/></svg>
<a class="t" style="left:49.90px;top:457.00px;font-size:12.0px;color:#cbd5e1;-webkit-text-stroke:0.38px currentColor;letter-spacing:0.148px;">Achievements</a>
<svg class="ic" style="left:20.60px;top:494.94px;width:18.4px;height:18.4px;fill:#cbd5e1;" viewBox="0 0 24 24"><path d="M4 7h16v2H4zm0 6h16v-2H4zm0 4h7v-2H4zm0 4h7v-2H4zm11.410-2.830L14 16.750l-1.410 1.410L15.410 21 20 16.420 18.580 15zM4 3v2h16V3z"/></svg>
<a class="t" style="left:49.90px;top:502.00px;font-size:12.0px;color:#cbd5e1;-webkit-text-stroke:0.38px currentColor;letter-spacing:0.093px;">AI Grading</a>
<svg class="ic" style="left:20.60px;top:539.97px;width:18.4px;height:18.4px;fill:#cbd5e1;" viewBox="0 0 24 24"><path fill-rule="evenodd" d="M20 3H4c-1.1 0-2 .9-2 2v14c0 1.1.9 2 2 2h16c1.1 0 2-.9 2-2V5c0-1.1-.9-2-2-2zM10 17H5v-2h5v2zm0-4H5v-2h5v2zm0-4H5V7h5v2zm4.820 6L12 12.160l1.410-1.410 1.410 1.420L17.990 9l1.420 1.420L14.820 15z"/></svg>
<a class="t" style="left:49.90px;top:547.00px;font-size:12.0px;color:#cbd5e1;-webkit-text-stroke:0.38px currentColor;letter-spacing:0.226px;">Quality Analyzer</a>
<svg class="ic" style="left:20.60px;top:585.00px;width:18.4px;height:18.4px;fill:#cbd5e1;" viewBox="0 0 24 24"><path d="M16 18l2.290-2.290-4.880-4.880-4 4L2 7.410 3.410 6l6 6 4-4 6.300 6.290L22 12v6z"/></svg>
<a class="t" style="left:49.90px;top:592.00px;font-size:12.0px;color:#cbd5e1;-webkit-text-stroke:0.38px currentColor;letter-spacing:0.342px;">Dropout Prediction</a>
<svg class="ic" style="left:20.60px;top:630.03px;width:18.4px;height:18.4px;fill:#cbd5e1;" viewBox="0 0 24 24"><path d="M19 3H5c-1.1 0-2 .9-2 2v14c0 1.1.9 2 2 2h14c1.1 0 2-.9 2-2V5c0-1.1-.9-2-2-2zM9 17H7v-5h2v5zm4 0h-2v-3h2v3zm0-5h-2v-2h2v2zm4 5h-2V7h2v10z"/></svg>
<a class="t" style="left:49.90px;top:637.00px;font-size:12.0px;color:#cbd5e1;-webkit-text-stroke:0.38px currentColor;letter-spacing:0.160px;">Analytics</a>
<svg class="ic" style="left:20.60px;top:675.06px;width:18.4px;height:18.4px;fill:#cbd5e1;" viewBox="0 0 24 24"><path d="M14 2H6c-1.1 0-1.990.9-1.990 2L4 20c0 1.1.89 2 1.990 2H18c1.1 0 2-.9 2-2V8l-6-6zm2 16H8v-2h8v2zm0-4H8v-2h8v2zm-3-5V3.500L18.500 9H13z"/></svg>
<a class="t" style="left:49.90px;top:682.00px;font-size:12.0px;color:#cbd5e1;-webkit-text-stroke:0.38px currentColor;letter-spacing:0.097px;">Reports</a>
<svg class="ic" style="left:20.60px;top:720.09px;width:18.4px;height:18.4px;fill:#cbd5e1;" viewBox="0 0 24 24"><path d="M21 5c-1.110-.35-2.330-.5-3.500-.5-1.950 0-4.050.4-5.500 1.500-1.450-1.100-3.550-1.500-5.500-1.500S2.450 4.900 1 6v14.650c0 .25.25.5.5.5.1 0 .15-.05.25-.05C3.100 20.450 5.050 20 6.500 20c1.950 0 4.050.4 5.500 1.500 1.350-.85 3.800-1.500 5.500-1.500 1.650 0 3.350.3 4.750 1.050.1.05.15.05.25.05.25 0 .5-.25.5-.5V6c-.6-.45-1.250-.75-2-1zm0 13.500c-1.100-.35-2.300-.5-3.500-.5-1.700 0-4.150.65-5.500 1.500V8c1.350-.85 3.800-1.500 5.500-1.500 1.200 0 2.400.15 3.500.5v11.500z"/><path d="M17.500 10.500c.88 0 1.730.09 2.500.26V9.240c-.79-.15-1.640-.24-2.500-.24-1.700 0-3.240.29-4.500.83v1.660c1.130-.64 2.700-.99 4.500-.99zM13 12.490v1.660c1.130-.64 2.700-.99 4.500-.99.88 0 1.730.09 2.500.26V11.900c-.79-.15-1.640-.24-2.500-.24-1.700 0-3.240.3-4.500.83zM17.500 14.330c-1.700 0-3.240.29-4.500.83v1.660c1.130-.64 2.700-.99 4.500-.99.88 0 1.730.09 2.500.26v-1.520c-.79-.16-1.640-.24-2.500-.24z"/></svg>
<a class="t" style="left:49.90px;top:727.00px;font-size:12.0px;color:#cbd5e1;-webkit-text-stroke:0.38px currentColor;letter-spacing:-0.297px;">Courses</a>
<svg class="ic" style="left:20.60px;top:765.12px;width:18.4px;height:18.4px;fill:#cbd5e1;" viewBox="0 0 24 24"><path d="M16 11c1.660 0 2.990-1.340 2.990-3S17.660 5 16 5c-1.660 0-3 1.340-3 3s1.340 3 3 3zm-8 0c1.660 0 2.990-1.340 2.990-3S9.660 5 8 5C6.340 5 5 6.340 5 8s1.340 3 3 3zm0 2c-2.330 0-7 1.170-7 3.500V19h14v-2.500c0-2.330-4.670-3.500-7-3.500zm8 0c-.29 0-.62.02-.97.05 1.160.84 1.970 1.970 1.970 3.450V19h6v-2.500c0-2.330-4.670-3.500-7-3.500z"/></svg>
<a class="t" style="left:49.90px;top:772.00px;font-size:12.0px;color:#cbd5e1;-webkit-text-stroke:0.38px currentColor;letter-spacing:-0.459px;">Users</a>
<svg class="ic" style="left:20.60px;top:810.15px;width:18.4px;height:18.4px;fill:#cbd5e1;" viewBox="0 0 24 24"><path d="M12 2C6.480 2 2 6.480 2 12s4.480 10 10 10 10-4.480 10-10S17.520 2 12 2zm0 3c1.660 0 3 1.340 3 3s-1.340 3-3 3-3-1.340-3-3 1.340-3 3-3zm0 14.200c-2.500 0-4.710-1.280-6-3.220.03-1.990 4-3.080 6-3.080 1.990 0 5.970 1.090 6 3.080-1.290 1.940-3.500 3.220-6 3.220z"/></svg>
<a class="t" style="left:49.90px;top:817.00px;font-size:12.0px;color:#cbd5e1;-webkit-text-stroke:0.38px currentColor;letter-spacing:0.228px;">My Profile</a>
<svg class="ic" style="left:20.60px;top:855.18px;width:18.4px;height:18.4px;fill:#cbd5e1;" viewBox="0 0 24 24"><path d="M19.140 12.940c.04-.3.06-.61.06-.94 0-.32-.02-.64-.07-.94l2.030-1.580c.18-.14.23-.41.12-.61l-1.920-3.320c-.12-.22-.37-.29-.59-.22l-2.390.96c-.5-.38-1.030-.7-1.620-.94l-.36-2.540c-.04-.24-.24-.41-.48-.41h-3.840c-.24 0-.43.17-.47.41l-.36 2.540c-.59.24-1.130.57-1.620.94l-2.390-.96c-.22-.08-.47 0-.59.22L2.740 8.870c-.12.21-.08.47.12.61l2.030 1.580c-.05.3-.09.63-.09.94s.02.64.07.94l-2.030 1.580c-.18.14-.23.41-.12.61l1.920 3.320c.12.22.37.29.59.22l2.390-.96c.5.38 1.030.7 1.620.94l.36 2.540c.05.24.24.41.48.41h3.840c.24 0 .44-.17.47-.41l.36-2.540c.59-.24 1.130-.56 1.620-.94l2.390.96c.22.08.47 0 .59-.22l1.920-3.320c.12-.22.07-.47-.12-.61l-2.010-1.580zM12 15.600c-1.980 0-3.600-1.620-3.600-3.600s1.620-3.600 3.600-3.600 3.600 1.620 3.600 3.600-1.620 3.600-3.600 3.600z"/></svg>
<a class="t" style="left:49.90px;top:862.50px;font-size:12.0px;color:#cbd5e1;-webkit-text-stroke:0.38px currentColor;letter-spacing:0.149px;">Settings</a>
<svg class="ic" style="left:20.60px;top:900.21px;width:18.4px;height:18.4px;fill:#cbd5e1;" viewBox="0 0 24 24"><path d="M17 11c.34 0 .67.04 1 .09V6.270L10.500 3 3 6.270v4.910c0 4.540 3.200 8.790 7.500 9.820.55-.13 1.080-.32 1.600-.55-.69-.98-1.100-2.170-1.100-3.450 0-3.310 2.690-6 6-6z"/><path d="M17 13c-2.210 0-4 1.790-4 4s1.790 4 4 4 4-1.790 4-4-1.790-4-4-4zm0 1.380c.62 0 1.120.51 1.120 1.120s-.51 1.120-1.120 1.120-1.120-.51-1.120-1.120.5-1.120 1.120-1.120zm0 5.370c-.93 0-1.740-.46-2.240-1.170.05-.72 1.510-1.080 2.240-1.080s2.190.36 2.240 1.080c-.5.71-1.310 1.170-2.240 1.170z"/></svg>
<a class="t" style="left:49.90px;top:907.50px;font-size:12.0px;color:#cbd5e1;-webkit-text-stroke:0.38px currentColor;letter-spacing:0.076px;">Admin Panel</a>
</nav>
</aside>
</div></body></html>
